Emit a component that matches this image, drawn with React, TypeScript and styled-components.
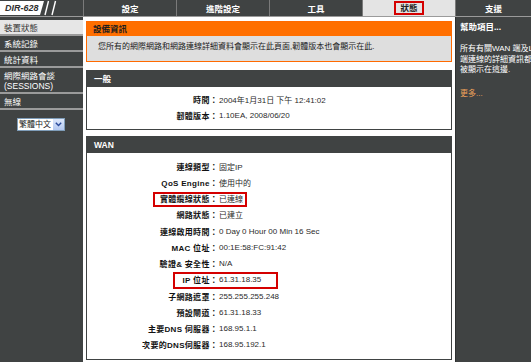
import React from 'react';
import styled, { createGlobalStyle } from 'styled-components';

const GlobalStyle = createGlobalStyle`
  html, body {
    margin: 0;
    padding: 0;
    background: #404343;
  }
  body {
    font-family: "Liberation Sans", "Noto Sans CJK TC", sans-serif;
    font-size: 8px;
    color: #222;
  }
`;

const Page = styled.div`
  width: 531px;
  height: 362px;
  overflow: hidden;
  display: grid;
  grid-template-columns: 83px 372px 76px;
  grid-template-rows: 17px 1fr;
  background: #404343;
`;

const TopBar = styled.div`
  grid-column: 1 / 4;
  display: flex;
  height: 16px;
  border-bottom: 1px solid #9a9a9a;
  background: #404343;
`;

const Logo = styled.div`
  flex: 0 0 83px;
  display: flex;
  align-items: flex-start;
`;

const LogoBadge = styled.div`
  width: 44px;
  height: 14px;
  margin-top: 1px;
  background: #fff;
  clip-path: polygon(0 0, 100% 0, calc(100% - 4px) 100%, 0 100%);
  color: #2e2e2e;
  font-family: "Liberation Sans", sans-serif;
  font-style: italic;
  font-weight: bold;
  font-size: 9px;
  line-height: 14px;
  padding-left: 5px;
  box-sizing: border-box;
`;

const Tab = styled.div<{ $active?: boolean; $grow?: boolean }>`
  flex: ${(p) => (p.$grow ? '1' : '0 0 93px')};
  box-sizing: border-box;
  border-left: 1px solid #7a7a7a;
  display: flex;
  align-items: center;
  justify-content: center;
  font-weight: bold;
  font-size: 8.5px;
  color: ${(p) => (p.$active ? '#222' : '#fff')};
  background: ${(p) => (p.$active ? '#e4e4e4' : 'transparent')};
`;

const TabMark = styled.span`
  border: 2px solid #d40000;
  padding: 0 4px;
  line-height: 10px;
  height: 10px;
`;

const Sidebar = styled.div`
  padding-top: 3px;
  display: flex;
  flex-direction: column;
`;

const NavItem = styled.div<{ $active?: boolean; $tall?: boolean }>`
  height: ${(p) => (p.$tall ? '26px' : '16px')};
  box-sizing: border-box;
  padding: ${(p) => (p.$tall ? '3px 0 0 4px' : '0 0 0 4px')};
  line-height: ${(p) => (p.$tall ? '10px' : '16px')};
  font-size: 8.5px;
  color: ${(p) => (p.$active ? '#333' : '#fff')};
  background: ${(p) => (p.$active ? '#e6e6e6' : 'transparent')};
  border-bottom: 2px solid #9a9a9a;
  white-space: nowrap;
`;

const LangSelect = styled.div`
  margin: 8px 0 0 17px;
  width: 48px;
  height: 13px;
  box-sizing: border-box;
  border: 1px solid #7f9db9;
  background: #fff;
  display: flex;
  align-items: center;
  justify-content: space-between;
  color: #222;
  line-height: 11px;
  padding-left: 1px;
`;

const LangArrow = styled.div`
  width: 11px;
  height: 11px;
  background: linear-gradient(#dce7fb, #b3c8f0);
  display: flex;
  align-items: center;
  justify-content: center;
`;

const Main = styled.div`
  background: #fff;
  padding: 4px 3px 0 3px;
  display: flex;
  flex-direction: column;
`;

const InfoBox = styled.div`
  border: 1px solid #ff6a00;
`;

const InfoHeader = styled.div`
  height: 14px;
  background: #ff6f00;
  color: #1e1e1e;
  font-weight: bold;
  font-size: 8.5px;
  line-height: 14px;
  padding-left: 6px;
`;

const InfoBody = styled.div`
  height: 25px;
  background: #dedede;
  padding: 6px 0 0 11px;
  box-sizing: border-box;
  line-height: 10px;
  color: #1a1a1a;
`;

const Box = styled.div<{ $gap: number }>`
  margin-top: ${(p) => p.$gap}px;
  border: 1px solid #404343;
`;

const BoxHeader = styled.div`
  height: 16px;
  line-height: 16px;
  background: #404343;
  color: #fff;
  font-weight: bold;
  font-size: 8.5px;
  padding-left: 7px;
`;

const BoxBody = styled.div<{ $top: number; $bottom: number }>`
  padding: ${(p) => p.$top}px 0 ${(p) => p.$bottom}px 0;
`;

const Row = styled.div<{ $h?: number }>`
  position: relative;
  display: flex;
  align-items: center;
  height: ${(p) => p.$h ?? 16}px;
  white-space: nowrap;
`;

const Label = styled.div`
  flex: 0 0 131px;
  text-align: right;
  font-weight: bold;
  color: #111;
  letter-spacing: 0.3px;
`;

const Value = styled.div`
  padding-left: 1px;
  color: #2a2a2a;
`;

const Mark = styled.div<{ $left: number; $width: number; $top: number; $height: number }>`
  position: absolute;
  left: ${(p) => p.$left}px;
  width: ${(p) => p.$width}px;
  top: ${(p) => p.$top}px;
  height: ${(p) => p.$height}px;
  border: 2px solid #d40000;
  box-sizing: border-box;
`;

const Help = styled.div`
  border-left: 1px solid #2f3131;
  padding: 4px 0 0 4px;
  overflow: hidden;
  color: #fff;
  white-space: nowrap;
`;

const HelpTitle = styled.div`
  font-weight: bold;
  font-size: 8.5px;
  line-height: 12px;
`;

const HelpText = styled.div`
  margin-top: 11px;
  line-height: 10.5px;
`;

const MoreLink = styled.div`
  margin-top: 12px;
  color: #f0a25a;
  line-height: 12px;
`;

const navItems = [
  { text: ['裝置狀態'], active: true },
  { text: ['系統記錄'] },
  { text: ['統計資料'] },
  { text: ['網際網路會談', '(SESSIONS)'] },
  { text: ['無線'] },
];

const general = [
  { label: '時間：', value: '2004年1月31日 下午 12:41:02' },
  { label: '韌體版本：', value: '1.10EA,  2008/06/20' },
];

type WanRow = {
  label: string;
  value: string;
  mark?: { left: number; width: number; top: number; height: number };
};

const wan: WanRow[] = [
  { label: '連線類型：', value: '固定IP' },
  { label: 'QoS Engine：', value: '使用中的' },
  { label: '實體纜線狀態：', value: '已連線', mark: { left: 66, width: 94, top: 1, height: 15 } },
  { label: '網路狀態：', value: '已建立' },
  { label: '連線啟用時間：', value: '0 Day 0 Hour 00 Min 16 Sec' },
  { label: 'MAC 位址：', value: '00:1E:58:FC:91:42' },
  { label: '驗證& 安全性：', value: 'N/A' },
  { label: 'IP 位址：', value: '61.31.18.35', mark: { left: 86, width: 105, top: 0, height: 17 } },
  { label: '子網路遮罩：', value: '255.255.255.248' },
  { label: '預設閘道：', value: '61.31.18.33' },
  { label: '主要DNS 伺服器：', value: '168.95.1.1' },
  { label: '次要的DNS伺服器：', value: '168.95.192.1' },
];

export default function App() {
  return (
    <>
      <GlobalStyle />
      <Page>
        <TopBar>
          <Logo>
            <LogoBadge>DIR-628</LogoBadge>
            <svg width="16" height="16" viewBox="0 0 16 16">
              <line x1="4.5" y1="1" x2="1" y2="15" stroke="#fff" strokeWidth="1.4" />
              <line x1="11.5" y1="1" x2="8" y2="15" stroke="#fff" strokeWidth="1.4" />
            </svg>
          </Logo>
          <Tab>設定</Tab>
          <Tab>進階設定</Tab>
          <Tab>工具</Tab>
          <Tab $active>
            <TabMark>狀態</TabMark>
          </Tab>
          <Tab $grow>支援</Tab>
        </TopBar>

        <Sidebar>
          {navItems.map((item) => (
            <NavItem key={item.text[0]} $active={item.active} $tall={item.text.length > 1}>
              {item.text.map((t) => (
                <div key={t}>{t}</div>
              ))}
            </NavItem>
          ))}
          <LangSelect>
            <span>繁體中文</span>
            <LangArrow>
              <svg width="7" height="5" viewBox="0 0 7 5">
                <path d="M0.8 0.8 L3.5 3.6 L6.2 0.8" fill="none" stroke="#2a4a9a" strokeWidth="1.4" />
              </svg>
            </LangArrow>
          </LangSelect>
        </Sidebar>

        <Main>
          <InfoBox>
            <InfoHeader>設備資訊</InfoHeader>
            <InfoBody>您所有的網際網路和網路連線詳細資料會顯示在此頁面,韌體版本也會顯示在此.</InfoBody>
          </InfoBox>

          <Box $gap={8}>
            <BoxHeader>一般</BoxHeader>
            <BoxBody $top={4} $bottom={6}>
              {general.map((r) => (
                <Row key={r.label}>
                  <Label>{r.label}</Label>
                  <Value>{r.value}</Value>
                </Row>
              ))}
            </BoxBody>
          </Box>

          <Box $gap={6}>
            <BoxHeader>WAN</BoxHeader>
            <BoxBody $top={5} $bottom={6}>
              {wan.map((r) => (
                <Row key={r.label} $h={16.25}>
                  <Label>{r.label}</Label>
                  <Value>{r.value}</Value>
                  {r.mark && (
                    <Mark
                      $left={r.mark.left}
                      $width={r.mark.width}
                      $top={r.mark.top}
                      $height={r.mark.height}
                    />
                  )}
                </Row>
              ))}
            </BoxBody>
          </Box>
        </Main>

        <Help>
          <HelpTitle>幫助項目...</HelpTitle>
          <HelpText>
            <div>所有有關WAN 端及L</div>
            <div>端連線的詳細資訊都</div>
            <div>被顯示在這邊.</div>
          </HelpText>
          <MoreLink>更多...</MoreLink>
        </Help>
      </Page>
    </>
  );
}
